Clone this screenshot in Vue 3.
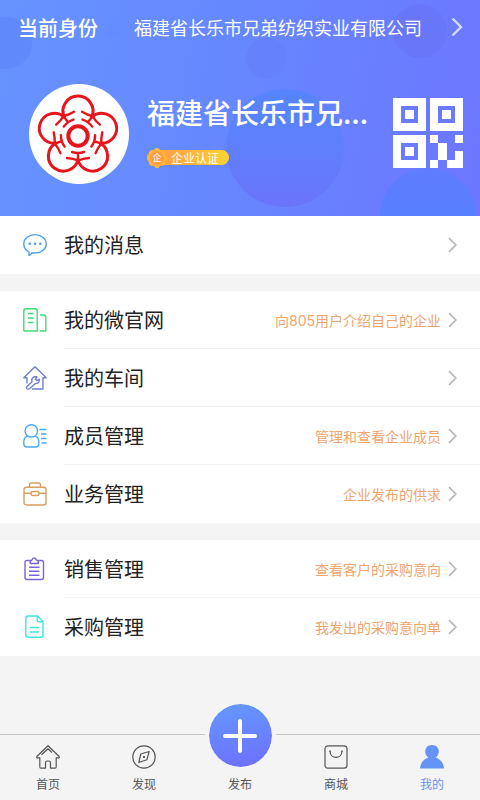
<template>
  <div class="page">
    <header class="header">
      <svg class="bubbles" viewBox="0 0 480 216" preserveAspectRatio="xMaxYMax slice" aria-hidden="true">
        <defs>
          <linearGradient id="bubbleBig" x1="0" y1="0" x2="0" y2="1">
            <stop offset="0" stop-color="#5585fd" />
            <stop offset="0.5" stop-color="#5f7ffd" />
            <stop offset="1" stop-color="#6a74fa" />
          </linearGradient>
          <linearGradient id="bubbleLow" x1="0" y1="0" x2="0" y2="1">
            <stop offset="0" stop-color="#5f7cfe" />
            <stop offset="0.5" stop-color="#567fff" />
          </linearGradient>
        </defs>
        <circle cx="6" cy="43" r="26" fill="#6089fb" />
        <circle cx="113" cy="31" r="7" fill="#648cfd" />
        <circle cx="266" cy="58" r="20" fill="#6581fc" />
        <circle cx="420" cy="31" r="27" fill="#6877fa" />
        <circle cx="285" cy="148" r="59" fill="url(#bubbleBig)" />
        <circle cx="428" cy="216" r="48" fill="url(#bubbleLow)" />
      </svg>

      <button type="button" class="identity">
        <span class="identity-label">当前身份</span>
        <span class="identity-company">{{ company }}</span>
        <svg class="identity-arrow" width="12" height="20" viewBox="0 0 12 20">
          <path d="M1.5 1.5 10 10 1.5 18.5" />
        </svg>
      </button>

      <div class="profile">
        <svg class="avatar" width="100" height="100" viewBox="0 0 100 100" aria-label="企业头像">
          <circle cx="50" cy="50" r="50" fill="#fff" />
          <g transform="translate(49 52)" fill="none" stroke="#e8141c" stroke-width="3" stroke-linecap="round">
            <circle r="9.7" stroke-width="4" />
            <g v-for="angle in petals" :key="angle" :transform="`rotate(${angle})`">
              <path d="M-13.8-19A15 15 0 1 1 13.8-19" />
              <path d="M-11 22Q-5 22.5 0 24.5Q5 22.5 11 22M0 24V17M-6 16Q0 18 6 16" stroke-width="2.4" />
            </g>
          </g>
        </svg>

        <div class="profile-info">
          <h1 class="profile-name">福建省长乐市兄...</h1>
          <div class="badge">
            <svg class="badge-seal" width="20" height="20" viewBox="0 0 20 20" aria-hidden="true">
              <g fill="#ffb636">
                <circle cx="10" cy="10" r="8.4" />
                <circle v-for="angle in scallops" :key="angle" cx="10" cy="2.8" r="2.8" :transform="`rotate(${angle} 10 10)`" />
              </g>
              <circle cx="10" cy="10" r="7" fill="#ff9f42" />
              <text x="10" y="13" text-anchor="middle" font-size="9" fill="#fff">企</text>
            </svg>
            <span class="badge-text">企业认证</span>
          </div>
        </div>

        <button type="button" class="qr" aria-label="二维码">
          <svg width="70" height="70" viewBox="0 0 70 70">
            <path
              fill="#fff"
              fill-rule="evenodd"
              d="M0 0h33v33H0zM8 8v17h17V8zM12 12h9v9h-9z
                 M37 0h33v33H37zM45 8v17h17V8zM49 12h9v9h-9z
                 M0 37h33v33H0zM8 45v17h17V45zM12 49h9v9h-9z
                 M37 37h8v8h-8zM62 37h8v8h-8zM45 45h9v17h-9zM37 62h8v8h-8zM62 53h8v17H54v-8h8z"
            />
          </svg>
        </button>
      </div>
    </header>

    <main class="menu">
      <ul v-for="(group, index) in groups" :key="index" class="menu-group">
        <li v-for="item in group" :key="item.title">
          <button type="button" class="menu-item">
            <svg class="menu-icon" :class="item.color" width="24" height="24" viewBox="0 0 24 24">
              <path :d="item.icon" />
            </svg>
            <span class="menu-body">
              <span class="menu-title">{{ item.title }}</span>
              <span class="menu-hint">{{ item.hint }}</span>
              <svg class="menu-arrow" width="9" height="16" viewBox="0 0 9 16">
                <path d="M1 1.2 7.8 8 1 14.8" />
              </svg>
            </span>
          </button>
        </li>
      </ul>
    </main>

    <nav class="tabbar">
      <button
        v-for="tab in tabs"
        :key="tab.key"
        type="button"
        class="tab"
        :class="{ active: tab.key === current }"
        @click="current = tab.key"
      >
        <span v-if="tab.key === 'publish'" class="tab-plus">
          <svg width="34" height="34" viewBox="0 0 34 34">
            <path d="M17 2v30M2 17h30" />
          </svg>
        </span>
        <svg v-else class="tab-icon" :class="tab.key" width="24" height="24" viewBox="0 0 24 24">
          <path :d="tab.icon" />
        </svg>
        <span class="tab-label">{{ tab.label }}</span>
      </button>
    </nav>
  </div>
</template>

<script setup>
import { ref } from 'vue';

const company = '福建省长乐市兄弟纺织实业有限公司';
const current = ref('mine');

const petals = [0, 72, 144, 216, 288];
const scallops = [0, 45, 90, 135, 180, 225, 270, 315];

// 菜单分组
const groups = [
  [
    {
      title: '我的消息',
      color: 'blue',
      icon: 'M6 22.5V19C2.6 17.2.8 14.4.8 11 .8 5.6 5.8 1.6 12 1.6S23.2 5.6 23.2 11 18.2 20 12 20C10.8 20 9.8 20 9 19.8 8 21.2 7 22 6 22.5zM6.2 10.2h1v1h-1zM11.5 10.2h1v1h-1zM16.8 10.2h1v1h-1z',
    },
  ],
  [
    {
      title: '我的微官网',
      hint: '向805用户介绍自己的企业',
      color: 'green',
      icon: 'M.8 23V3Q.8 .8 3 .8H12Q14.2 .8 14.2 3V23H.8M5 5.5H10.5M5 10H10.5M5 14.5H10.5M17 7H20.5Q22.8 7 22.8 9.2V23H17',
    },
    {
      title: '我的车间',
      color: 'indigo',
      icon: 'M4 17.5V11.8H.8L12 .8 23.2 11.8H20V23H9M4.2 22.8Q2.8 21.8 4 20.5L9 15.8Q8 12 11.2 10.8L14 10.8 12.5 13.2 13.8 14.6 16.2 13.2Q16.8 17.5 12.2 17.8L6.8 22.5Q5.4 23.6 4.2 22.8z',
    },
    {
      title: '成员管理',
      hint: '管理和查看企业成员',
      color: 'sky',
      icon: 'M8.5 .8C12 .8 14.5 3.5 14.5 7S12 13 8.5 13 2 10.5 2 7 5 .8 8.5 .8zM4.5 12.2C2 13 .8 15 .8 18V20Q.8 23 4 23H12.5Q15.8 23 15.8 20V18C15.8 15 14.5 13 12.2 12.2M16.5 5.5H23.5M18 10H23.5M18 14.5H23.5M18.5 19H23.5',
    },
    {
      title: '业务管理',
      hint: '企业发布的供求',
      color: 'brown',
      icon: 'M3.5 5.2H20.5Q23 5.2 23 7.7V20.5Q23 23 20.5 23H3.5Q1 23 1 20.5V7.7Q1 5.2 3.5 5.2zM6.5 5V3Q6.5 1 8.5 1H15.5Q17.5 1 17.5 3V5M1 11.2H8M16 11.2H23M10 9.5H14Q16 9.5 16 11.5T14 13.5H10Q8 13.5 8 11.5T10 9.5z',
    },
  ],
  [
    {
      title: '销售管理',
      hint: '查看客户的采购意向',
      color: 'purple',
      icon: 'M7.5 3.5H4Q2 3.5 2 5.5V20.5Q2 22.5 4 22.5H18.5Q20.5 22.5 20.5 20.5V5.5Q20.5 3.5 18.5 3.5H15M7.2 6.5Q7 3.5 9 3Q9.5 1 11.2 1T13.5 3Q15.5 3.5 15.3 6.5zM6 10.2H16.5M6 14.2H16.5M6 18.2H16.5',
    },
    {
      title: '采购管理',
      hint: '我发出的采购意向单',
      color: 'cyan',
      icon: 'M5 1H14.5L20 6.5V20Q20 22.2 17.8 22.2H5Q2.8 22.2 2.8 20V3.2Q2.8 1 5 1zM14.2 1.2V5Q14.2 6.8 16 6.8H20M7 12.5H16M7 17H16',
    },
  ],
];

// 底部导航
const tabs = [
  {
    key: 'home',
    label: '首页',
    icon: 'M3.8 12.8H.8V11.5L12 .8 23.2 11.5V12.8H20.2V22Q20.2 23.2 19 23.2H14.5V17.5Q14.5 16 12.8 16H11.2Q9.5 16 9.5 17.5V23.2H5Q3.8 23.2 3.8 22zM5.5 9.8 12 3.8 16 7.5',
  },
  {
    key: 'discover',
    label: '发现',
    icon: 'M12 .8A11.2 11.2 0 0 1 12 23.2 11.2 11.2 0 0 1 12 .8zM17.2 6.5 14.8 14.8 6.8 17.5 8.8 9zM11.6 11.6h.8v.8h-.8z',
  },
  { key: 'publish', label: '发布' },
  {
    key: 'mall',
    label: '商城',
    icon: 'M4 .8H20Q23 .8 23 3.8V20.2Q23 23.2 20 23.2H4Q1 23.2 1 20.2V3.8Q1 .8 4 .8zM6 6.2C6.4 14.5 17.6 14.5 18 6.2M5.3 6.7 6 5.8 6.8 6.6M17.2 6.6 18 5.8 18.7 6.7',
  },
  {
    key: 'mine',
    label: '我的',
    icon: 'M12 0C16 0 18.8 2.8 18.8 6.6 18.8 9.2 17.5 11.4 15.6 12.6 20.5 14 23.6 18 24 23.6H0C.4 18 3.5 14 8.4 12.6 6.5 11.4 5.2 9.2 5.2 6.6 5.2 2.8 8 0 12 0z',
  },
];
</script>

<style>
body {
  margin: 0;
  background: #f4f4f4;
}
</style>

<style scoped>
.page {
  display: flex;
  flex-direction: column;
  min-height: 100vh;
  background: #f4f4f4;
  color: #222;
  font-family: "Noto Sans CJK SC", sans-serif;
}
button {
  margin: 0;
  padding: 0;
  border: none;
  background: none;
  color: inherit;
  font-family: inherit;
  cursor: pointer;
}
svg {
  display: block;
  flex-shrink: 0;
}

/* 头部 */
.header {
  position: relative;
  overflow: hidden;
  padding-bottom: 32px;
  background: linear-gradient(100deg, #6693ff 0%, #6688ff 45%, #6c76ff 100%);
  color: #fff;
}
.bubbles {
  position: absolute;
  inset: 0;
  width: 100%;
  height: 100%;
}
.identity {
  position: relative;
  display: flex;
  align-items: center;
  width: 100%;
  height: 54px;
  padding: 0 17px 0 18px;
  text-align: left;
}
.identity-label {
  font-size: 20px;
  font-weight: 500;
}
.identity-company {
  flex: 1;
  margin-left: 36px;
  font-size: 18px;
  white-space: nowrap;
}
.identity-arrow {
  fill: none;
  stroke: #d3dcff;
  stroke-width: 2.4;
}
.profile {
  position: relative;
  display: flex;
  align-items: flex-start;
  padding: 30px 17px 0 29px;
}
.profile-info {
  flex: 1;
  padding: 8px 0 0 18px;
}
.profile-name {
  margin: 0;
  font-size: 28px;
  font-weight: 500;
  line-height: 40px;
  white-space: nowrap;
}
.badge {
  display: inline-flex;
  align-items: center;
  height: 15px;
  margin-top: 18px;
  padding-right: 10px;
  border-radius: 8px;
  background: linear-gradient(90deg, #ff9a4c, #ffb03c 50%, #ffd52e);
}
.badge-text {
  margin-left: 4px;
  font-size: 12px;
  line-height: 15px;
}
.qr {
  margin-top: 14px;
}

/* 菜单 */
.menu {
  display: flex;
  flex-direction: column;
  gap: 17px;
  padding-bottom: 48px;
}
.menu-group {
  margin: 0;
  padding: 0;
  background: #fff;
  list-style: none;
}
.menu-item {
  display: flex;
  align-items: center;
  width: 100%;
  height: 58px;
  padding-left: 23px;
  text-align: left;
}
.menu-icon {
  fill: none;
  stroke: currentColor;
  stroke-width: 1.4;
  stroke-linejoin: round;
}
.menu-body {
  display: flex;
  flex: 1;
  align-items: center;
  box-sizing: border-box;
  height: 58px;
  margin-left: 17px;
  padding-right: 23px;
  border-bottom: 1px solid #f2f2f4;
}
.menu-group li:last-child .menu-body {
  border-bottom-color: transparent;
}
.menu-title {
  flex: 1;
  font-size: 20px;
}
.menu-hint {
  margin-right: 7px;
  color: #f0a46c;
  font-family: Inter, "Noto Sans CJK SC", sans-serif;
  font-size: 14px;
}
.menu-arrow {
  fill: none;
  stroke: #b8b8bc;
  stroke-width: 1.7;
}
.blue { color: #4aa3ee; }
.green { color: #42dc74; }
.indigo { color: #6f80d4; }
.sky { color: #4aabf8; }
.brown { color: #d9a05c; }
.purple { color: #7c62dc; }
.cyan { color: #3ee6dc; }

/* 底部导航 */
.tabbar {
  display: flex;
  height: 65px;
  margin-top: auto;
  border-top: 1px solid #c8c8c8;
}
.tab {
  display: flex;
  flex: 1;
  flex-direction: column;
  align-items: center;
  justify-content: flex-end;
  padding-bottom: 7px;
  color: #555;
}
.tab-icon {
  fill: none;
  stroke: currentColor;
  stroke-width: 1.2;
  stroke-linejoin: round;
}
.tab-icon.mine {
  fill: #6494f8;
  stroke: none;
}
.tab-label {
  margin-top: 6px;
  font-size: 12px;
  line-height: 18px;
}
.tab.active {
  color: #6a8fee;
}
/* 描边与页面同色，把分隔线断开 */
.tab-plus {
  display: flex;
  flex-shrink: 0;
  align-items: center;
  justify-content: center;
  width: 63px;
  height: 63px;
  margin-bottom: -2px;
  border: 4px solid #f4f4f4;
  border-radius: 50%;
  background: linear-gradient(170deg, #6499ff, #6e6eff) padding-box;
}
.tab-plus path {
  fill: none;
  stroke: #fff;
  stroke-width: 4;
  stroke-linecap: round;
}
</style>
